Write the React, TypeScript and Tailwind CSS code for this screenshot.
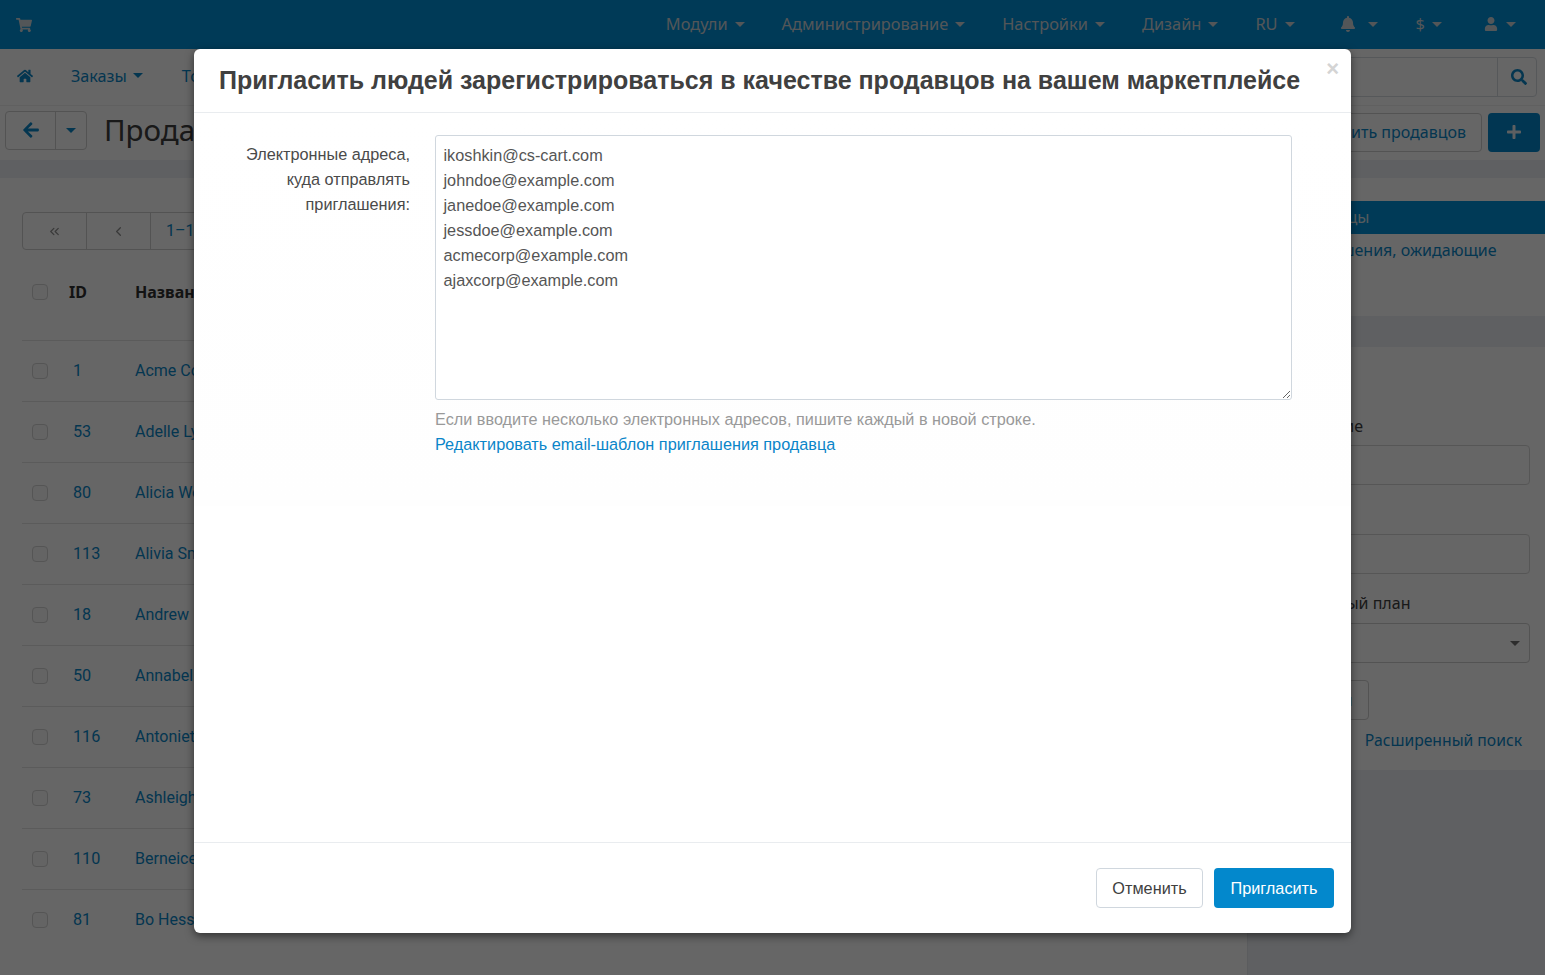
import { FaBell, FaHome, FaPlus, FaSearch, FaShoppingCart, FaUser, FaArrowLeft } from "react-icons/fa";
import { ChevronLeft, ChevronsLeft } from "lucide-react";

const sellers = [
  { id: 1, name: "Acme Corporation" },
  { id: 53, name: "Adelle Lynch" },
  { id: 80, name: "Alicia Wood" },
  { id: 113, name: "Alivia Smith" },
  { id: 18, name: "Andrew Miller" },
  { id: 50, name: "Annabel Lee" },
  { id: 116, name: "Antoniette Ray" },
  { id: 73, name: "Ashleigh Cole" },
  { id: 110, name: "Berneice Hart" },
  { id: 81, name: "Bo Hess" },
];

const emails = `ikoshkin@cs-cart.com
johndoe@example.com
janedoe@example.com
jessdoe@example.com
acmecorp@example.com
ajaxcorp@example.com`;

function Caret({ className }: { className: string }) {
  return <span className={`inline-block w-0 h-0 border-x-[5px] border-x-transparent border-t-[5px] ${className}`} />;
}

function TopItem({ label }: { label: string }) {
  return (
    <div className="flex items-center gap-[7px] text-[16.4px] text-[#d0d8dc]">
      <span className="mb-[1px]">{label}</span>
      <Caret className="border-t-[#d0d8dc]" />
    </div>
  );
}

function Checkbox() {
  return <span className="block w-4 h-4 rounded-[4px] border border-[#d5d5d5] bg-[#fafafa]" />;
}

export default function App() {
  return (
    <div className="relative h-screen overflow-hidden bg-white font-['Noto_Sans',sans-serif] text-[#404040]">
      {/* шапка */}
      <header className="h-[49px] bg-[#0091d9] flex items-center justify-between pl-[16px] pr-[29px]">
        <FaShoppingCart size={16} className="text-[#d0d8dc]" />
        <div className="flex items-center">
          <div className="flex items-center gap-[37px] mr-[45px]">
            <TopItem label="Модули" />
            <TopItem label="Администрирование" />
            <TopItem label="Настройки" />
            <TopItem label="Дизайн" />
            <TopItem label="RU" />
          </div>
          <div className="flex items-center gap-[8px] mr-[38px]">
            <FaBell size={16} className="text-[#d0d8dc]" />
            <Caret className="border-t-[#d0d8dc] ml-[4px]" />
          </div>
          <div className="mr-[42px]">
            <TopItem label="$" />
          </div>
          <div className="flex items-center gap-[8px]">
            <FaUser size={14} className="text-[#d0d8dc]" />
            <Caret className="border-t-[#d0d8dc]" />
          </div>
        </div>
      </header>

      {/* второе меню */}
      <nav className="h-[56px] flex items-center pl-[17px] pr-[8px] text-[16.2px] text-[#0a87c9]">
        <div className="flex items-center mb-[2px]">
          <FaHome size={16} className="mr-[38px]" />
          <span>Заказы</span>
          <Caret className="border-t-[#0a87c9] ml-[6px] mr-[39px]" />
          <span>Товары</span>
        </div>
        <div className="ml-auto h-10 w-[300px] flex border border-[#d8dde2] rounded-[4px]">
          <div className="flex-1" />
          <div className="w-[39px] pl-[3px] border-l border-[#d8dde2] flex items-center justify-center">
            <FaSearch size={16} />
          </div>
        </div>
      </nav>

      {/* заголовок */}
      <div className="h-[55px] flex items-center pl-[5px] pr-[5px] border-t border-[#f0f0f0]">
        <div className="flex h-[39px] mb-[6px] border border-[#d0d0d0] rounded-[4px] text-[#0a87c9]">
          <div className="w-[50px] flex items-center justify-center border-r border-[#d0d0d0]">
            <FaArrowLeft size={18} />
          </div>
          <div className="w-[30px] flex items-center justify-center">
            <Caret className="border-t-[#0a87c9]" />
          </div>
        </div>
        <h1 className="ml-[17px] mb-[6px] text-[29.5px] text-[#404040]">Продавцы</h1>
        <div className="ml-auto flex items-center gap-[6px] mb-[2px]">
          <div className="h-[39px] px-[15px] flex items-center border border-[#d0d0d0] rounded-[4px] text-[16px] text-[#0a87c9]">
            Пригласить продавцов
          </div>
          <div className="h-[39px] w-[52px] flex items-center justify-center rounded-[4px] bg-[#0388cc] text-[#e8eef2]">
            <FaPlus size={16} />
          </div>
        </div>
      </div>

      <div className="h-[18px] bg-[#eef0f5]" />

      <div className="flex h-[797px]">
        {/* таблица */}
        <main className="w-[1247px] pl-[22px] pr-[20px] pt-[34px] font-['Roboto',sans-serif] text-[16px]">
          <div className="flex w-fit h-[38px] border border-[#d0d0d0] rounded-[4px] text-[#0a87c9]">
            <div className="w-[64px] flex items-center justify-center border-r border-[#d0d0d0] text-[#909090]">
              <ChevronsLeft size={15} />
            </div>
            <div className="w-[64px] flex items-center justify-center border-r border-[#d0d0d0] text-[#909090]">
              <ChevronLeft size={15} />
            </div>
            <div className="px-[15px] flex items-center">1–10 из 121</div>
          </div>
          <div className="h-[90px] flex items-start pt-[30px] font-bold font-['Noto_Sans',sans-serif] text-[#303030]">
            <div className="w-[47px] pl-[10px] pt-[4px]">
              <Checkbox />
            </div>
            <div className="w-[66px]">ID</div>
            <div>Название</div>
          </div>
          {sellers.map((s) => (
            <div key={s.id} className="h-[61px] flex items-center border-t border-[#e4e4e4]">
              <div className="w-[51px] pl-[10px]">
                <Checkbox />
              </div>
              <div className="w-[62px] text-[16.2px] text-[#0a87c9]">{s.id}</div>
              <div className="text-[#0a87c9]">{s.name}</div>
            </div>
          ))}
        </main>

        {/* боковая панель */}
        <aside className="w-[298px] bg-[#eef0f5] border-l border-[#e4e6ea] text-[16px]">
          <div className="bg-white h-[138px] pt-[23px]">
            <div className="h-[33px] bg-[#0091d9] pl-[41px] pb-[2px] flex items-center text-[#d8e4ea]">Продавцы</div>
            <div className="pl-[36px] pt-[4px] leading-[25px] text-[#0a87c9]">Приглашения, ожидающие</div>
          </div>
          <div className="mt-[31px] h-[423px] bg-white pl-[40px] pr-[15px] pt-[68px] text-[#404040]">
            <div className="leading-[22px]">Название</div>
            <div className="mt-[8px] h-10 border border-[#d8d8d8] rounded-[4px]" />
            <div className="mt-[49px] h-10 border border-[#d8d8d8] rounded-[4px]" />
            <div className="mt-[18px] leading-[22px]">Тарифный план</div>
            <div className="mt-[9px] h-10 border border-[#d0d0d0] rounded-[4px] flex items-center justify-end pr-[9px]">
              <Caret className="border-t-[#707070]" />
            </div>
            <div className="mt-[17px] flex items-center">
              <div className="h-10 w-[81px] border border-[#d0d0d0] rounded-[4px] flex items-center justify-center text-[#0a87c9]">
                Найти
              </div>
            </div>
            <div className="mt-[9px] text-right pr-[8px] text-[15.7px] leading-[22px] text-[#0a87c9]">Расширенный поиск</div>
          </div>
        </aside>
      </div>

      {/* затемнение */}
      <div className="absolute inset-0 bg-black/60" />

      {/* окно приглашения */}
      <div className="absolute left-[194px] top-[49px] w-[1157px] h-[884px] flex flex-col bg-white rounded-[6px] shadow-[0_3px_9px_rgba(0,0,0,0.5)] font-['Liberation_Sans',Arial,sans-serif] text-[16.25px] text-[#404040]">
        <div className="relative h-[64px] shrink-0 border-b border-[#e9ecef] flex items-center pl-[25px]">
          <h3 className="mb-[2px] text-[25px] font-bold leading-[58px] text-[#404040]">
            Пригласить людей зарегистрироваться в качестве продавцов на вашем маркетплейсе
          </h3>
          <span className="absolute right-[12px] top-[7px] text-[22px] leading-[26px] font-bold text-[#d4d4d4]">×</span>
        </div>

        <div className="h-[393px] shrink-0 flex pt-[22px] bg-gradient-to-b from-white to-[#fefefe]">
          <div className="w-[216px] shrink-0 text-right leading-[25px] pt-[7px] text-[#4a4a4a]">
            Электронные адреса,
            <br />
            куда отправлять
            <br />
            приглашения:
          </div>
          <div className="ml-[25px] w-[857px]">
            <textarea
              readOnly
              defaultValue={emails}
              className="block w-[857px] h-[265px] border border-[#d0d7de] rounded-[3px] bg-white px-[7.5px] py-[7px] text-[16.25px] leading-[25px] text-[#555555] font-['Liberation_Sans',Arial,sans-serif] outline-none"
            />
            <p className="mt-[7px] leading-[25px] text-[#999999]">
              Если вводите несколько электронных адресов, пишите каждый в новой строке.
            </p>
            <a className="block leading-[25px] text-[#0a85c9]">Редактировать email-шаблон приглашения продавца</a>
          </div>
        </div>

        <div className="flex-1" />

        <div className="h-[91px] shrink-0 border-t border-[#e9ecef] flex items-start justify-end gap-[11px] pt-[25px] pr-[17px]">
          <button className="h-10 w-[107px] pt-[1px] rounded-[4px] border border-[#d0d7de] bg-white text-[#404040]">Отменить</button>
          <button className="h-10 w-[120px] pt-[1px] rounded-[4px] bg-[#0388cc] text-white">Пригласить</button>
        </div>
      </div>
    </div>
  );
}
